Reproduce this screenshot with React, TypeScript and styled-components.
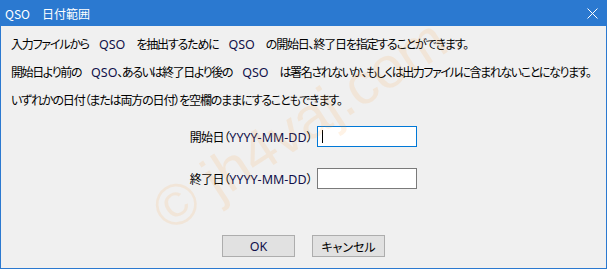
import React from "react";
import styled, { createGlobalStyle } from "styled-components";

const Global = createGlobalStyle`
  html, body { margin: 0; padding: 0; background: #f0f0f0; }
  body { font-family: "Noto Sans CJK JP", "Noto Sans", sans-serif; }
`;

const Window = styled.div`
  position: relative;
  width: 607px;
  height: 269px;
  box-sizing: border-box;
  border: 1px solid #2b79d0;
  border-top: none;
  background: #f0f0f0;
  display: flex;
  flex-direction: column;
  overflow: hidden;
`;

const TitleBar = styled.div`
  height: 26px;
  margin: 0 -1px;
  background: #2b79d0;
  color: #ffffff;
  display: flex;
  align-items: center;
  justify-content: space-between;
  padding: 0 9px 0 5px;
  font-size: 12px;
  font-feature-settings: "palt";
`;

const CloseButton = styled.div`
  width: 12px;
  height: 12px;
  display: flex;
  align-items: center;
  justify-content: center;
`;

const Body = styled.div`
  flex: 1;
  padding: 4px 10px 0 10px;
  display: flex;
  flex-direction: column;
  font-size: 12px;
  color: #000;
  font-feature-settings: "palt";
`;

const Line = styled.div<{ $tracking: number }>`
  height: 28px;
  line-height: 28px;
  white-space: nowrap;
  letter-spacing: ${(p) => p.$tracking}px;
`;

const Form = styled.div`
  margin-top: 12px;
  display: grid;
  grid-template-columns: 301px 100px;
  column-gap: 5px;
  row-gap: 21px;
`;

const Label = styled.div`
  height: 21px;
  line-height: 21px;
  text-align: right;
  white-space: nowrap;
  color: #000;
  letter-spacing: -0.6px;
`;

const Latin = styled.span<{ $before?: number; $after?: number }>`
  font-family: "Noto Sans", "Open Sans", sans-serif;
  font-size: 12.5px;
  letter-spacing: 0;
  color: #10104a;
  margin-left: ${(p) => p.$before ?? 0}px;
  margin-right: ${(p) => p.$after ?? 0}px;
`;

const TextBox = styled.div<{ $focused?: boolean }>`
  height: 21px;
  box-sizing: border-box;
  background: #fff;
  border: 1px solid ${(p) => (p.$focused ? "#0078d7" : "#7a7a7a")};
  display: flex;
  align-items: center;
  padding-left: 4px;
`;

const Caret = styled.span`
  width: 1px;
  height: 13px;
  background: #000;
`;

const Buttons = styled.div`
  margin-top: 46px;
  display: flex;
  justify-content: center;
  gap: 17px;
`;

const Button = styled.div`
  width: 73px;
  height: 22px;
  box-sizing: border-box;
  border: 1px solid #adadad;
  background: #e1e1e1;
  display: flex;
  align-items: center;
  justify-content: center;
  font-size: 12px;
  color: #000;
`;

const ButtonLatin = styled.span`
  font-family: "Noto Sans", "Open Sans", sans-serif;
  font-size: 12.5px;
  color: #10104a;
`;

const Watermark = styled.div`
  position: absolute;
  left: 298px;
  top: 124px;
  transform: translate(-50%, -50%) rotate(-33deg);
  font-family: "Liberation Sans", Arial, sans-serif;
  font-size: 58px;
  color: rgba(255, 160, 50, 0.12);
  white-space: nowrap;
  pointer-events: none;
`;

export default function App() {
  return (
    <>
      <Global />
      <Window>
        <TitleBar>
          <span>QSO　日付範囲</span>
          <CloseButton>
            <svg width="11" height="11" viewBox="0 0 11 11">
              <path d="M0.5 0.5 L10.5 10.5 M10.5 0.5 L0.5 10.5" stroke="#fff" strokeWidth="1" />
            </svg>
          </CloseButton>
        </TitleBar>
        <Body>
          <Line $tracking={-1.2}>
            入力ファイルから<Latin $before={10} $after={11}>QSO</Latin>を抽出するために<Latin $before={10} $after={11}>QSO</Latin>の開始日、終了日を指定することができます。
          </Line>
          <Line $tracking={-1.4}>
            開始日より前の<Latin $before={10}>QSO</Latin>、あるいは終了日より後の<Latin $before={10} $after={11}>QSO</Latin>は署名されないか、もしくは出力ファイルに含まれないことになります。
          </Line>
          <Line $tracking={-1.15}>いずれかの日付（または両方の日付）を空欄のままにすることもできます。</Line>
          <Form>
            <Label>
              開始日（<Latin>YYYY-MM-DD</Latin>）
            </Label>
            <TextBox $focused>
              <Caret />
            </TextBox>
            <Label>
              終了日（<Latin>YYYY-MM-DD</Latin>）
            </Label>
            <TextBox />
          </Form>
          <Buttons>
            <Button>
              <ButtonLatin>OK</ButtonLatin>
            </Button>
            <Button>キャンセル</Button>
          </Buttons>
        </Body>
        <Watermark>© jh4vaj.com</Watermark>
      </Window>
    </>
  );
}
